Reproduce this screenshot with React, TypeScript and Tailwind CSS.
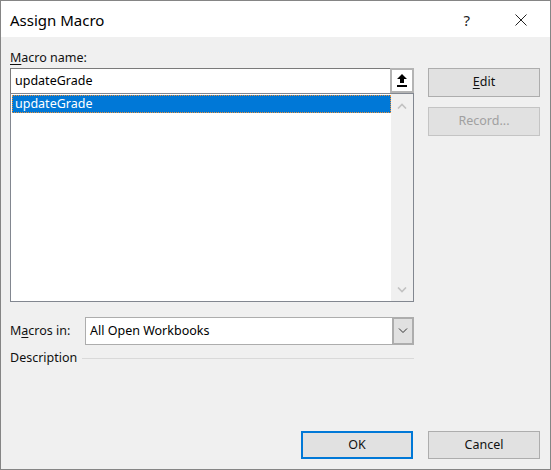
import React from "react";

function ChevronUp({ color }: { color: string }) {
  return (
    <svg width="10" height="6" viewBox="0 0 10 6" fill="none">
      <path d="M1 5.5 L5 1.5 L9 5.5" stroke={color} strokeWidth="1.6" />
    </svg>
  );
}

function ChevronDown({ color, w = 1.6 }: { color: string; w?: number }) {
  return (
    <svg width="10" height="6" viewBox="0 0 10 6" fill="none">
      <path d="M1 0.5 L5 4.5 L9 0.5" stroke={color} strokeWidth={w} />
    </svg>
  );
}

export default function App() {
  return (
    <div className="w-[551px] h-[470px] bg-[#f0f0f0] border border-[#858585] flex flex-col text-[12.5px] text-black [font-family:'Noto_Sans',sans-serif]">
      {/* Title bar */}
      <div className="h-[36px] bg-white flex items-center pl-[9px] shrink-0">
        <span className="text-[15px] leading-[20px] mt-[1px]">Assign Macro</span>
        <div className="flex-1" />
        <span className="text-[15px] leading-[20px] mt-[1px] text-[#222]">?</span>
        <div className="w-[45px]" />
        <svg width="12" height="12" viewBox="0 0 12 12" fill="none" className="mt-[1px]">
          <path d="M0.5 0.5 L11.5 11.5 M11.5 0.5 L0.5 11.5" stroke="#222" strokeWidth="1" />
        </svg>
        <div className="w-[23px]" />
      </div>

      {/* Body */}
      <div className="flex-1 flex flex-col pl-[9px] pr-[10px]">
        <div className="flex pt-[12px]">
          {/* Left column */}
          <div className="w-[404px] flex flex-col">
            <div className="h-[17px] leading-[17px] text-[#111]">
              <span className="underline underline-offset-2">M</span>acro name:
            </div>
            <div className="mt-[2px] h-[25px] flex">
              <div className="flex-1 border-t border-l border-[#7a7a7a] bg-white pl-[4px] leading-[23px]">
                updateGrade
              </div>
              <div className="w-[24px] border-2 border-[#b4b4b4] bg-white flex items-center justify-center">
                <svg width="10" height="13" viewBox="0 0 10 13">
                  <polygon points="5,0 10,5 7,5 7,9 3,9 3,5 0,5" fill="#000" />
                  <rect x="0" y="11" width="10" height="2" fill="#000" />
                </svg>
              </div>
            </div>
            <div className="h-[209px] border border-[#828790] bg-white flex">
              <div className="flex-1 pt-px pl-px">
                <div className="h-[18px] bg-[#0078d7] border border-dotted border-[#e8913a] text-white pl-[2px] leading-[15px]">
                  updateGrade
                </div>
              </div>
              <div className="w-[22px] bg-[#f0f0f0] flex flex-col items-center justify-between pt-[9px] pb-[8px]">
                <ChevronUp color="#c2c2c2" />
                <ChevronDown color="#c2c2c2" />
              </div>
            </div>

            <div className="mt-[15px] flex items-center h-[28px]">
              <div className="w-[75px] text-[#111]">
                M<span className="underline underline-offset-2">a</span>cros in:
              </div>
              <div className="flex-1 h-full flex">
                <div className="flex-1 border-y border-l border-[#adadad] bg-white pl-[4px] leading-[26px]">
                  All Open Workbooks
                </div>
                <div className="w-[22px] border-2 border-[#adadad] bg-[#e1e1e1] flex items-center justify-center">
                  <ChevronDown color="#333" w={1} />
                </div>
              </div>
            </div>

            <div className="mt-[4px] h-[17px] flex items-center">
              <span className="leading-[17px] text-[#111]">Description</span>
              <div className="flex-1 h-px bg-[#d9d9d9] ml-[5px] mt-px" />
            </div>
          </div>

          {/* Right column */}
          <div className="ml-[14px] w-[112px] pt-[19px] flex flex-col">
            <button className="h-[29px] w-full bg-[#e1e1e1] border border-[#adadad] text-[#111]">
              <span className="underline underline-offset-2">E</span>dit
            </button>
            <button className="mt-[10px] h-[29px] w-full bg-[#e1e1e1] border border-[#c4c4c4] text-[#a0a0a0]">
              Record...
            </button>
          </div>
        </div>

        <div className="mt-auto flex justify-end gap-[15px] pb-[10px]">
          <button className="w-[112px] h-[28px] bg-[#e1e1e1] border-2 border-[#0078d7] text-[#111]">OK</button>
          <button className="w-[112px] h-[28px] bg-[#e1e1e1] border border-[#adadad] text-[#111]">Cancel</button>
        </div>
      </div>
    </div>
  );
}
